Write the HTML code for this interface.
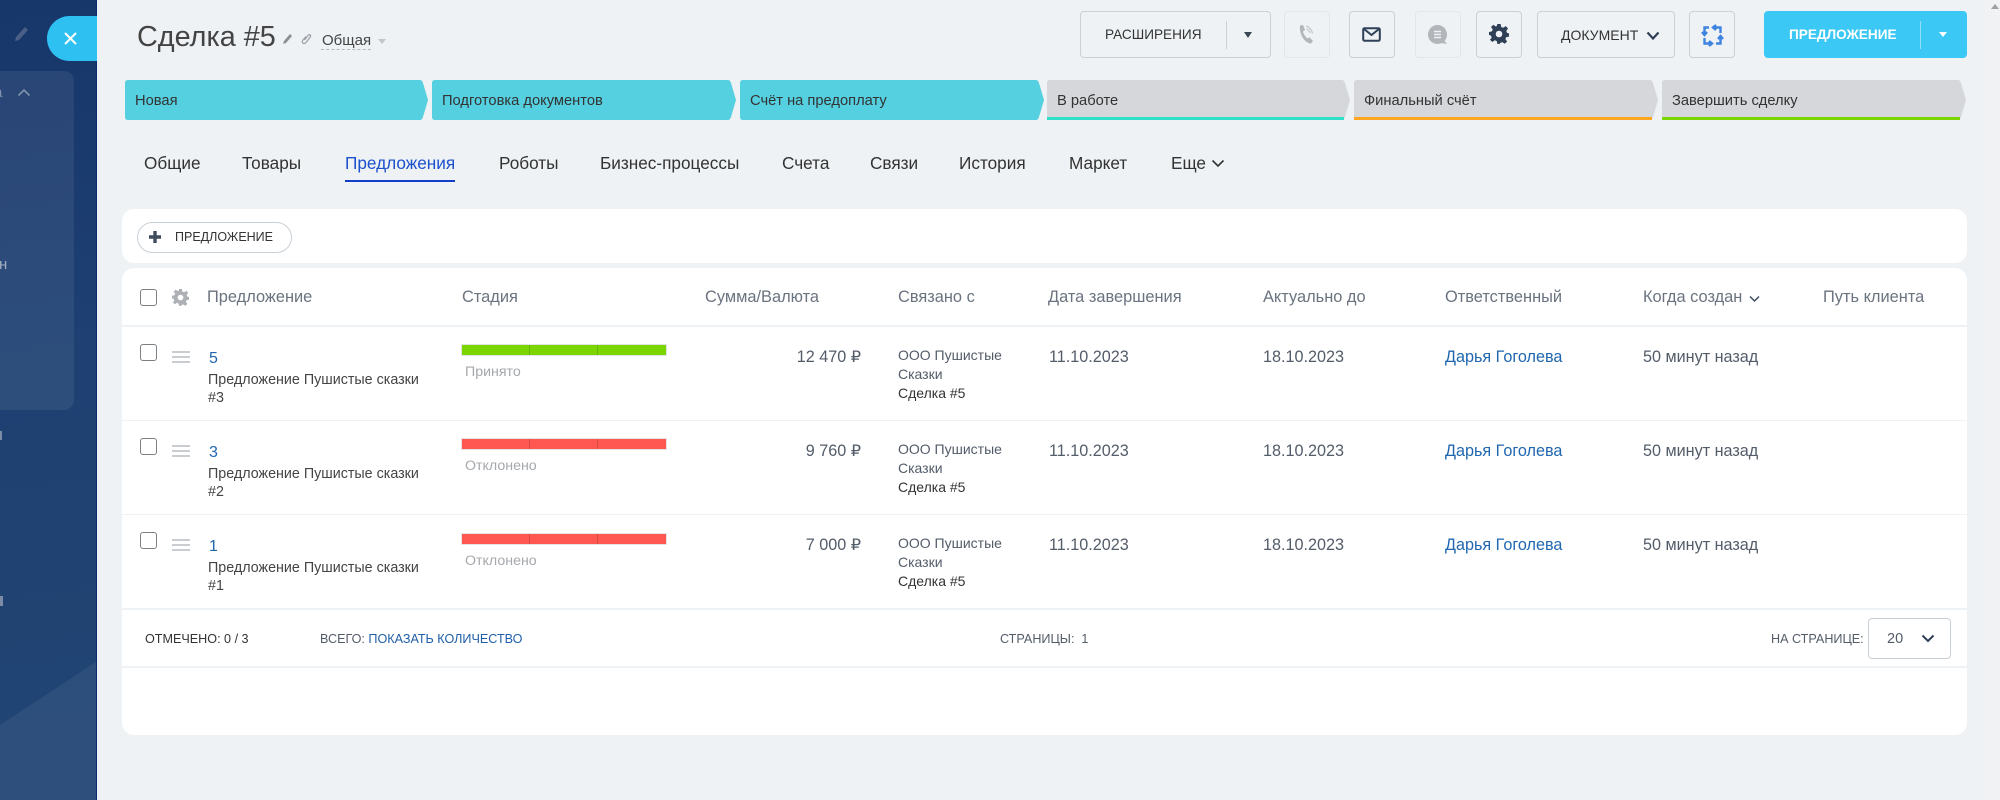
<!DOCTYPE html>
<html lang="ru"><head><meta charset="utf-8"><title>Сделка #5</title>
<style>
html,body{margin:0;padding:0;width:2000px;height:800px;overflow:hidden;background:#eef2f4;font-family:"Liberation Sans","DejaVu Sans",sans-serif;color:#333}
.a{position:absolute}
.t{position:absolute;white-space:nowrap;line-height:20px;height:20px}
.st{position:absolute;top:80px;height:40px}
.st svg{position:absolute;left:0;top:0}
.st span{position:absolute;left:10px;top:11px;font-size:14.7px;line-height:20px;color:#333;white-space:nowrap}
.btn{position:absolute;top:11px;height:45px;border:1px solid #c9d0d6;border-radius:4px;box-sizing:content-box}
.dis{border-color:#e2e6ea}
.tab{font-size:17.2px;top:153px;color:#333}
.h{font-size:16.4px;color:#6a737f;top:287px}
.num{font-size:16px;color:#2067b0}
.sub{font-size:14.3px;color:#444}
.cell{font-size:16.2px;color:#535c69}
.rel{font-size:14px;color:#535c69}
.cb{position:absolute;left:140px;width:15px;height:15px;border:1px solid #7b8085;border-radius:3px;background:#fff}
.ham{position:absolute;left:172px;width:18px;height:12px;border-top:2px solid #c9ccd0;border-bottom:2px solid #c9ccd0;box-sizing:border-box}
.ham:after{content:"";position:absolute;left:0;right:0;top:3px;height:2px;background:#c9ccd0}
.bar{position:absolute;left:462px;width:204px;height:10px;box-shadow:0 0 0 1px #e2e4e6}
.bar i{position:absolute;top:0;bottom:0;width:1px;background:rgba(0,0,0,.15)}
.ln{position:absolute;left:122px;width:1845px;height:2px;background:#eef2f4}
.ft{font-size:12.6px;color:#535c69}
.gr{font-size:14.2px;color:#a5a8ac}
</style></head><body>

<!-- sidebar -->
<div class="a" style="left:0;top:0;width:97px;height:800px;background:linear-gradient(172deg,#17366a 0%,#1e4072 45%,#214573 100%);border-right:1px solid #0d2a70;box-sizing:border-box"></div>
<svg class="a" style="left:0;top:0" width="96" height="800"><polygon points="0,725 96,662 96,800 0,800" fill="#fff" opacity=".06"/></svg>
<div class="a" style="left:-10px;top:71px;width:84px;height:339px;border-radius:10px;background:rgba(255,255,255,.07)"></div>
<div class="t" style="left:-6px;top:83px;font-size:15px;color:#7f93ad">а</div>
<svg class="a" style="left:17px;top:88px" width="14" height="9"><path d="M1.500 7.500 7 2l5.500 5.500" fill="none" stroke="#7f93ad" stroke-width="1.600"/></svg>
<div class="t" style="left:-1px;top:255px;font-size:15px;color:#a2aebf">н</div>
<div class="a" style="left:0;top:431px;width:2px;height:9px;background:#7a8ca6"></div>
<div class="a" style="left:0;top:596px;width:3px;height:10px;background:#7a8ca6"></div>
<svg class="a" style="left:13px;top:25px" width="17" height="18"><path d="M2 16l1-4L12 2l3 3L6 15z" fill="#4a5f85"/></svg>
<div class="a" style="left:47px;top:16px;width:50px;height:45px;background:#2fc0f2;border-radius:23px 0 0 23px"></div>
<svg class="a" style="left:63px;top:31px" width="15" height="15"><path d="M2 2l11 11M13 2 2 13" stroke="#fff" stroke-width="2" fill="none"/></svg>

<!-- title -->
<div class="t" style="left:137px;top:18px;height:38px;line-height:38px;font-size:28.8px;color:#444">Сделка #5</div>
<svg class="a" style="left:282px;top:32px" width="12" height="13"><path d="M1 12l1-3 6-7 2 2-6 7z" fill="#8a9096"/></svg>
<svg class="a" style="left:300px;top:32px" width="12" height="14"><path d="M4.500 8 8 3.500c1.500-1.800 3.500 0 2.200 1.600L6 10.500c-2 2.300-5 0-3.200-2.200L6 4.500" fill="none" stroke="#9aa0a6" stroke-width="1.200"/></svg>
<div class="t" style="left:322px;top:31px;font-size:15px;color:#444">Общая</div>
<div class="a" style="left:321px;top:49px;width:50px;border-top:1px dashed #b5b9bd"></div>
<div class="a" style="left:378px;top:39px;border:4.500px solid transparent;border-top:5px solid #c2c6ca"></div>

<!-- top buttons -->
<div class="btn" style="left:1080px;width:189px"></div>
<div class="t" style="left:1105px;top:25px;font-size:13.6px;color:#333">РАСШИРЕНИЯ</div>
<div class="a" style="left:1226px;top:21px;width:1px;height:28px;background:#c9d0d6"></div>
<div class="a" style="left:1244px;top:32px;border:4.500px solid transparent;border-top:6px solid #3a4656"></div>

<div class="btn dis" style="left:1284px;width:44px"></div>
<svg class="a" style="left:1296px;top:23px" width="22" height="24"><path d="M4 2.500 7 2l2 5-2 1.500c.5 2.500 2.500 5.500 4.500 7l2-1.300 3.500 3.800-2 2.500C9 20 3 12 4 2.500z" fill="#b2b6bb"/><path d="M10 3c3.500 1 6 4 6.500 7.500M10.500 6c2 .7 3 2 3.500 4" fill="none" stroke="#c4c8cc" stroke-width="1.200"/></svg>
<div class="btn" style="left:1349px;width:44px"></div>
<svg class="a" style="left:1362px;top:27px" width="20" height="16"><rect x="1.200" y="1.200" width="16.600" height="12.600" rx="1.500" fill="none" stroke="#2f4058" stroke-width="2"/><path d="M2 2l7.500 6L17 2" fill="none" stroke="#2f4058" stroke-width="2"/></svg>
<div class="btn dis" style="left:1415px;width:44px"></div>
<svg class="a" style="left:1427px;top:24px" width="22" height="22"><circle cx="10.500" cy="10.500" r="9.500" fill="#b2b6bb"/><path d="M16 15l4 5-6-1z" fill="#b2b6bb"/><path d="M7 7.500h7M7 10.500h7M7 13.500h7" stroke="#eef2f4" stroke-width="1.400"/></svg>
<div class="btn" style="left:1476px;width:44px"></div>
<svg class="a" style="left:1489px;top:24px" width="20" height="20" viewBox="0 0 20 20"><path d="M8.300 0h3.400l.5 3 2 .8 2.500-1.700 2.300 2.300L17.300 7l.8 2 2 .4v3.200l-2.900.5-.8 2 1.700 2.400-2.300 2.300-2.500-1.700-2 .8-.5 1H8.300l-.5-2.800-2-.8-2.500 1.700L1 15.800 2.700 13.500l-.8-2L0 11V8l2.900-.6.800-2L2 3.100 4.300.8l2.500 1.700 1-.5z" fill="#2f3f55"/><circle cx="10" cy="10" r="3.300" fill="#eef2f4"/></svg>
<div class="btn" style="left:1537px;width:136px"></div>
<div class="t" style="left:1561px;top:25px;font-size:14px;color:#333">ДОКУМЕНТ</div>
<svg class="a" style="left:1646px;top:31px" width="14" height="10"><path d="M1.500 1.500 7 7.500l5.500-6" fill="none" stroke="#2f3f55" stroke-width="2.200"/></svg>
<div class="btn" style="left:1689px;width:44px"></div>
<svg class="a" style="left:1701px;top:24px" width="23" height="23" viewBox="0 0 23 23" fill="none" stroke="#3d83e0" stroke-width="2.400"><path d="M8 3.500H3.500V9M1 8l2.500 3L6 8"/><path d="M19.500 9V3.500H13M15 1l-3 2.500L15 6"/><path d="M15 19.500h4.500V14M17 15l2.500-3L22 15"/><path d="M3.500 14v5.500H10M8 17l3 2.500L8 22"/></svg>
<div class="a" style="left:1764px;top:11px;width:203px;height:47px;background:#3bc8f5;border-radius:4px"></div>
<div class="t" style="left:1789px;top:25px;font-size:13.6px;color:#fff;font-weight:bold">ПРЕДЛОЖЕНИЕ</div>
<div class="a" style="left:1920px;top:21px;width:1px;height:28px;background:rgba(255,255,255,.45)"></div>
<div class="a" style="left:1939px;top:32px;border:4.500px solid transparent;border-top:5.500px solid #fff"></div>

<!-- scrollbar -->
<div class="a" style="left:1983px;top:0;width:17px;height:800px;background:#f0f2f4"></div>
<div class="a" style="left:1991px;top:4px;border:4px solid transparent;border-top:0;border-bottom:5px solid #a0a0a0"></div>

<!-- stages -->
<div class="st" style="left:125px;width:303px"><svg width="303" height="40"><path d="M3 0H295Q297 0 298 3L303 20 298 37Q297 40 295 40H3Q0 40 0 37V3Q0 0 3 0Z" fill="#55d0e0"/></svg><span>Новая</span></div>
<div class="st" style="left:432px;width:304px"><svg width="304" height="40"><path d="M3 0H296Q298 0 299 3L304 20 299 37Q298 40 296 40H3Q0 40 0 37V3Q0 0 3 0Z" fill="#55d0e0"/></svg><span>Подготовка документов</span></div>
<div class="st" style="left:740px;width:304px"><svg width="304" height="40"><path d="M3 0H296Q298 0 299 3L304 20 299 37Q298 40 296 40H3Q0 40 0 37V3Q0 0 3 0Z" fill="#55d0e0"/></svg><span>Счёт на предоплату</span></div>
<div class="st" style="left:1047px;width:303px"><svg width="303" height="40"><path d="M0 3Q0 0 3 0H295Q297 0 298 3L303 20 298 37Q297 40 295 40H0Z" fill="#d5d7db"/><rect y="37" width="297" height="3" fill="#2fe0c8"/></svg><span>В работе</span></div>
<div class="st" style="left:1354px;width:304px"><svg width="304" height="40"><path d="M0 3Q0 0 3 0H296Q298 0 299 3L304 20 299 37Q298 40 296 40H0Z" fill="#d5d7db"/><rect y="37" width="298" height="3" fill="#ffa51f"/></svg><span>Финальный счёт</span></div>
<div class="st" style="left:1662px;width:304px"><svg width="304" height="40"><path d="M0 3Q0 0 3 0H296Q298 0 299 3L304 20 299 37Q298 40 296 40H0Z" fill="#d5d7db"/><rect y="37" width="298" height="3" fill="#7bd500"/></svg><span>Завершить сделку</span></div>

<!-- tabs -->
<div class="t tab" style="left:144px">Общие</div>
<div class="t tab" style="left:242px">Товары</div>
<div class="t tab" style="left:345px;color:#1c50cc">Предложения</div>
<div class="a" style="left:345px;top:180px;width:110px;height:2px;background:#1040c8"></div>
<div class="t tab" style="left:499px">Роботы</div>
<div class="t tab" style="left:600px">Бизнес-процессы</div>
<div class="t tab" style="left:782px">Счета</div>
<div class="t tab" style="left:870px">Связи</div>
<div class="t tab" style="left:959px">История</div>
<div class="t tab" style="left:1069px">Маркет</div>
<div class="t tab" style="left:1171px">Еще</div>
<svg class="a" style="left:1211px;top:159px" width="14" height="9"><path d="M1.500 1.500 7 7l5.500-5.500" fill="none" stroke="#333" stroke-width="1.600"/></svg>

<!-- cards -->
<div class="a" style="left:122px;top:209px;width:1845px;height:54px;background:#fff;border-radius:12px"></div>
<div class="a" style="left:137px;top:222px;width:153px;height:29px;border:1px solid #c9d0d6;border-radius:16px;background:#fff"></div>
<svg class="a" style="left:148px;top:230px" width="14" height="14"><path d="M7 1v12M1 7h12" stroke="#3f4c5e" stroke-width="3.400"/></svg>
<div class="t" style="left:175px;top:227px;font-size:12.5px;color:#333">ПРЕДЛОЖЕНИЕ</div>

<div class="a" style="left:122px;top:268px;width:1845px;height:467px;background:#fff;border-radius:12px"></div>

<div class="cb" style="top:289px"></div>
<svg class="a" style="left:172px;top:289px" width="17" height="17" viewBox="0 0 20 20"><path d="M8.300 0h3.400l.5 3 2 .8 2.500-1.700 2.300 2.300L17.300 7l.8 2 2 .4v3.200l-2.900.5-.8 2 1.700 2.400-2.300 2.300-2.500-1.700-2 .8-.5 1H8.300l-.5-2.800-2-.8-2.500 1.700L1 15.800 2.700 13.500l-.8-2L0 11V8l2.900-.6.800-2L2 3.100 4.300.8l2.500 1.700 1-.5z" fill="#adb1b6"/><circle cx="10" cy="10" r="3.300" fill="#fff"/></svg>
<div class="t h" style="left:207px">Предложение</div>
<div class="t h" style="left:462px">Стадия</div>
<div class="t h" style="left:705px">Сумма/Валюта</div>
<div class="t h" style="left:898px">Связано с</div>
<div class="t h" style="left:1048px">Дата завершения</div>
<div class="t h" style="left:1263px">Актуально до</div>
<div class="t h" style="left:1445px">Ответственный</div>
<div class="t h" style="left:1643px">Когда создан</div>
<svg class="a" style="left:1749px;top:295px" width="11" height="8"><path d="M1 1.500 5.500 6 10 1.500" fill="none" stroke="#3f4c5e" stroke-width="1.500"/></svg>
<div class="t h" style="left:1823px">Путь клиента</div>
<div class="ln" style="top:325px"></div>

<!-- row 1 -->
<div class="cb" style="top:344px"></div><div class="ham" style="top:351px"></div>
<div class="t num" style="left:209px;top:349px">5</div>
<div class="t sub" style="left:208px;top:370px">Предложение Пушистые сказки</div>
<div class="t sub" style="left:208px;top:388px">#3</div>
<div class="bar" style="top:345px;background:#7bd500"><i style="left:67px"></i><i style="left:135px"></i></div>
<div class="t gr" style="left:465px;top:362px">Принято</div>
<div class="t cell" style="left:761px;width:100px;text-align:right;top:347px">12 470 ₽</div>
<div class="t rel" style="left:898px;top:345px">ООО Пушистые</div>
<div class="t rel" style="left:898px;top:364px">Сказки</div>
<div class="t rel" style="left:898px;top:383px;color:#333">Сделка #5</div>
<div class="t cell" style="left:1049px;top:347px">11.10.2023</div>
<div class="t cell" style="left:1263px;top:347px">18.10.2023</div>
<div class="t cell" style="left:1445px;top:347px;color:#2067b0">Дарья Гоголева</div>
<div class="t cell" style="left:1643px;top:347px">50 минут назад</div>
<div class="ln" style="top:420px;height:1px"></div>

<!-- row 2 -->
<div class="cb" style="top:438px"></div><div class="ham" style="top:445px"></div>
<div class="t num" style="left:209px;top:443px">3</div>
<div class="t sub" style="left:208px;top:464px">Предложение Пушистые сказки</div>
<div class="t sub" style="left:208px;top:482px">#2</div>
<div class="bar" style="top:439px;background:#ff5752"><i style="left:67px"></i><i style="left:135px"></i></div>
<div class="t gr" style="left:465px;top:456px">Отклонено</div>
<div class="t cell" style="left:761px;width:100px;text-align:right;top:441px">9 760 ₽</div>
<div class="t rel" style="left:898px;top:439px">ООО Пушистые</div>
<div class="t rel" style="left:898px;top:458px">Сказки</div>
<div class="t rel" style="left:898px;top:477px;color:#333">Сделка #5</div>
<div class="t cell" style="left:1049px;top:441px">11.10.2023</div>
<div class="t cell" style="left:1263px;top:441px">18.10.2023</div>
<div class="t cell" style="left:1445px;top:441px;color:#2067b0">Дарья Гоголева</div>
<div class="t cell" style="left:1643px;top:441px">50 минут назад</div>
<div class="ln" style="top:514px;height:1px"></div>

<!-- row 3 -->
<div class="cb" style="top:532px"></div><div class="ham" style="top:539px"></div>
<div class="t num" style="left:209px;top:537px">1</div>
<div class="t sub" style="left:208px;top:558px">Предложение Пушистые сказки</div>
<div class="t sub" style="left:208px;top:576px">#1</div>
<div class="bar" style="top:534px;background:#ff5752"><i style="left:67px"></i><i style="left:135px"></i></div>
<div class="t gr" style="left:465px;top:551px">Отклонено</div>
<div class="t cell" style="left:761px;width:100px;text-align:right;top:535px">7 000 ₽</div>
<div class="t rel" style="left:898px;top:533px">ООО Пушистые</div>
<div class="t rel" style="left:898px;top:552px">Сказки</div>
<div class="t rel" style="left:898px;top:571px;color:#333">Сделка #5</div>
<div class="t cell" style="left:1049px;top:535px">11.10.2023</div>
<div class="t cell" style="left:1263px;top:535px">18.10.2023</div>
<div class="t cell" style="left:1445px;top:535px;color:#2067b0">Дарья Гоголева</div>
<div class="t cell" style="left:1643px;top:535px">50 минут назад</div>
<div class="ln" style="top:608px"></div>

<!-- footer -->
<div class="t ft" style="left:145px;top:629px;color:#333">ОТМЕЧЕНО: 0 / 3</div>
<div class="t ft" style="left:320px;top:629px">ВСЕГО: <span style="color:#1f5fa8">ПОКАЗАТЬ КОЛИЧЕСТВО</span></div>
<div class="t ft" style="left:1000px;top:629px">СТРАНИЦЫ:&nbsp; 1</div>
<div class="t ft" style="left:1771px;top:629px">НА СТРАНИЦЕ:</div>
<div class="a" style="left:1868px;top:618px;width:81px;height:39px;border:1px solid #c9d0d6;border-radius:4px;background:#fff"></div>
<div class="t cell" style="left:1887px;top:629px;font-size:14.5px">20</div>
<svg class="a" style="left:1921px;top:634px" width="14" height="10"><path d="M1.500 1.500 7 7l5.500-5.500" fill="none" stroke="#2f3f55" stroke-width="2"/></svg>
<div class="ln" style="top:666px"></div>
</body></html>
